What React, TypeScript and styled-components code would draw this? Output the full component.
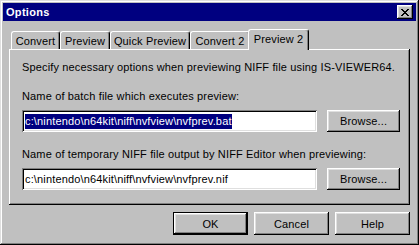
import styled, { createGlobalStyle } from "styled-components";

const GlobalStyle = createGlobalStyle`
  * {
    box-sizing: border-box;
  }

  html, body {
    margin: 0;
    padding: 0;
    background: #c0c0c0;
    font-family: "Liberation Sans", Arial, sans-serif;
    font-size: 11px;
    letter-spacing: 0.15px;
    color: #000000;
  }
`;

interface Tab {
  label: string;
  width: number;
}

const TABS: Tab[] = [
  { label: "Convert", width: 49 },
  { label: "Preview", width: 50 },
  { label: "Quick Preview", width: 80 },
  { label: "Convert 2", width: 60 },
  { label: "Preview 2", width: 57 },
];

const ACTIVE_TAB = "Preview 2";

const OptionsDialog = () => {
  return (
    <>
      <GlobalStyle />
      <Window>
        {/* Title bar */}
        <TitleBar>
          <Title>Options</Title>
          <CloseButton>
            <svg width="8" height="7" viewBox="0 0 8 7">
              <path
                d="M0 0h2v1h1v1h2V1h1V0h2v1H7v1H6v1H5v1h1v1h1v1h1v1H6V6H5V5H3v1H2v1H0V6h1V5h1V4h1V3H2V2H1V1H0z"
                fill="#000"
              />
            </svg>
          </CloseButton>
        </TitleBar>

        <Body>
          {/* Tabs */}
          <TabStrip>
            {TABS.map((tab) => (
              <TabItem
                key={tab.label}
                $width={tab.width}
                $active={tab.label === ACTIVE_TAB}
              >
                {tab.label}
              </TabItem>
            ))}
          </TabStrip>

          {/* Tab panel */}
          <Panel>
            <Intro>
              Specify necessary options when previewing NIFF file using
              IS-VIEWER64.
            </Intro>

            <Field>
              <FieldLabel>Name of batch file which executes preview:</FieldLabel>
              <FieldRow>
                <TextBox>
                  <Selected>c:\nintendo\n64kit\niff\nvfview\nvfprev.bat</Selected>
                </TextBox>
                <BrowseButton>Browse...</BrowseButton>
              </FieldRow>
            </Field>

            <Field>
              <FieldLabel>
                Name of temporary NIFF file output by NIFF Editor when
                previewing:
              </FieldLabel>
              <FieldRow>
                <TextBox>c:\nintendo\n64kit\niff\nvfview\nvfprev.nif</TextBox>
                <BrowseButton>Browse...</BrowseButton>
              </FieldRow>
            </Field>
          </Panel>

          {/* Dialog buttons */}
          <ButtonRow>
            <DialogButton $default>OK</DialogButton>
            <DialogButton>Cancel</DialogButton>
            <DialogButton>Help</DialogButton>
          </ButtonRow>
        </Body>
      </Window>
    </>
  );
};

export default OptionsDialog;

// Styled Components
const Window = styled.div`
  width: 419px;
  height: 245px;
  background: #c0c0c0;
  padding: 3px;
  box-shadow: inset -1px -1px #000000, inset 1px 1px #dfdfdf,
    inset -2px -2px #808080, inset 2px 2px #ffffff;
  display: flex;
  flex-direction: column;
`;

const TitleBar = styled.div`
  height: 18px;
  background: #000080;
  display: flex;
  align-items: center;
  justify-content: space-between;
  padding: 0 3px 0 3px;
`;

const Title = styled.span`
  font-weight: 700;
  font-size: 11px;
  color: #ffffff;
  letter-spacing: 0.3px;
`;

const CloseButton = styled.div`
  width: 16px;
  height: 14px;
  background: #c0c0c0;
  display: flex;
  align-items: center;
  justify-content: center;
  padding-top: 1px;
  box-shadow: inset -1px -1px #000000, inset 1px 1px #ffffff,
    inset -2px -2px #808080, inset 2px 2px #dfdfdf;
`;

const Body = styled.div`
  flex: 1;
  display: flex;
  flex-direction: column;
  padding: 8px 6px 0 6px;
`;

const TabStrip = styled.div`
  display: flex;
  align-items: flex-end;
  height: 20px;
  padding-left: 2px;
  position: relative;
  z-index: 1;
`;

const TabItem = styled.div<{ $width: number; $active: boolean }>`
  width: ${(p) => p.$width + (p.$active ? 4 : 0)}px;
  height: ${(p) => (p.$active ? 21 : 18)}px;
  margin: 0 ${(p) => (p.$active ? -2 : 0)}px;
  margin-bottom: ${(p) => (p.$active ? -1 : 0)}px;
  background: #c0c0c0;
  border-top: 1px solid #ffffff;
  border-left: 1px solid #ffffff;
  border-right: 1px solid #000000;
  border-top-left-radius: 3px;
  border-top-right-radius: 3px;
  box-shadow: inset -1px 0 #808080;
  display: flex;
  align-items: ${(p) => (p.$active ? "flex-start" : "center")};
  padding-top: ${(p) => (p.$active ? 3 : 0)}px;
  justify-content: center;
  white-space: nowrap;
  z-index: ${(p) => (p.$active ? 2 : 0)};
`;

const Panel = styled.div`
  height: 156px;
  background: #c0c0c0;
  box-shadow: inset -1px -1px #000000, inset 1px 1px #ffffff,
    inset -2px -2px #808080;
  padding: 12px 10px 0 13px;
  display: flex;
  flex-direction: column;
`;

const Intro = styled.p`
  margin: 0;
  line-height: 13px;
  white-space: nowrap;
`;

const Field = styled.div`
  display: flex;
  flex-direction: column;
  gap: 7px;
  margin-top: 16px;
`;

const FieldLabel = styled.span`
  line-height: 13px;
  white-space: nowrap;
`;

const FieldRow = styled.div`
  display: flex;
  align-items: center;
  gap: 10px;
`;

const TextBox = styled.div`
  width: 296px;
  height: 22px;
  background: #ffffff;
  padding: 3px 3px;
  display: flex;
  align-items: center;
  white-space: nowrap;
  overflow: hidden;
  box-shadow: inset 1px 1px #808080, inset -1px -1px #ffffff,
    inset 2px 2px #000000, inset -2px -2px #dfdfdf;
`;

const Selected = styled.span`
  background: #000080;
  color: #ffffff;
  line-height: 15px;
`;

const BrowseButton = styled.button`
  width: 73px;
  height: 22px;
  padding: 0;
  border: none;
  background: #c0c0c0;
  font-family: inherit;
  font-size: 11px;
  letter-spacing: inherit;
  color: #000000;
  box-shadow: inset -1px -1px #000000, inset 1px 1px #ffffff,
    inset -2px -2px #808080, inset 2px 2px #dfdfdf;
`;

const ButtonRow = styled.div`
  display: flex;
  justify-content: flex-end;
  gap: 6px;
  margin-top: 7px;
`;

const DialogButton = styled.button<{ $default?: boolean }>`
  width: 75px;
  height: 23px;
  padding: 0;
  border: ${(p) => (p.$default ? "1px solid #000000" : "none")};
  background: #c0c0c0;
  font-family: inherit;
  font-size: 11px;
  letter-spacing: inherit;
  color: #000000;
  box-shadow: inset -1px -1px #000000, inset 1px 1px #ffffff,
    inset -2px -2px #808080, inset 2px 2px #dfdfdf;
`;
